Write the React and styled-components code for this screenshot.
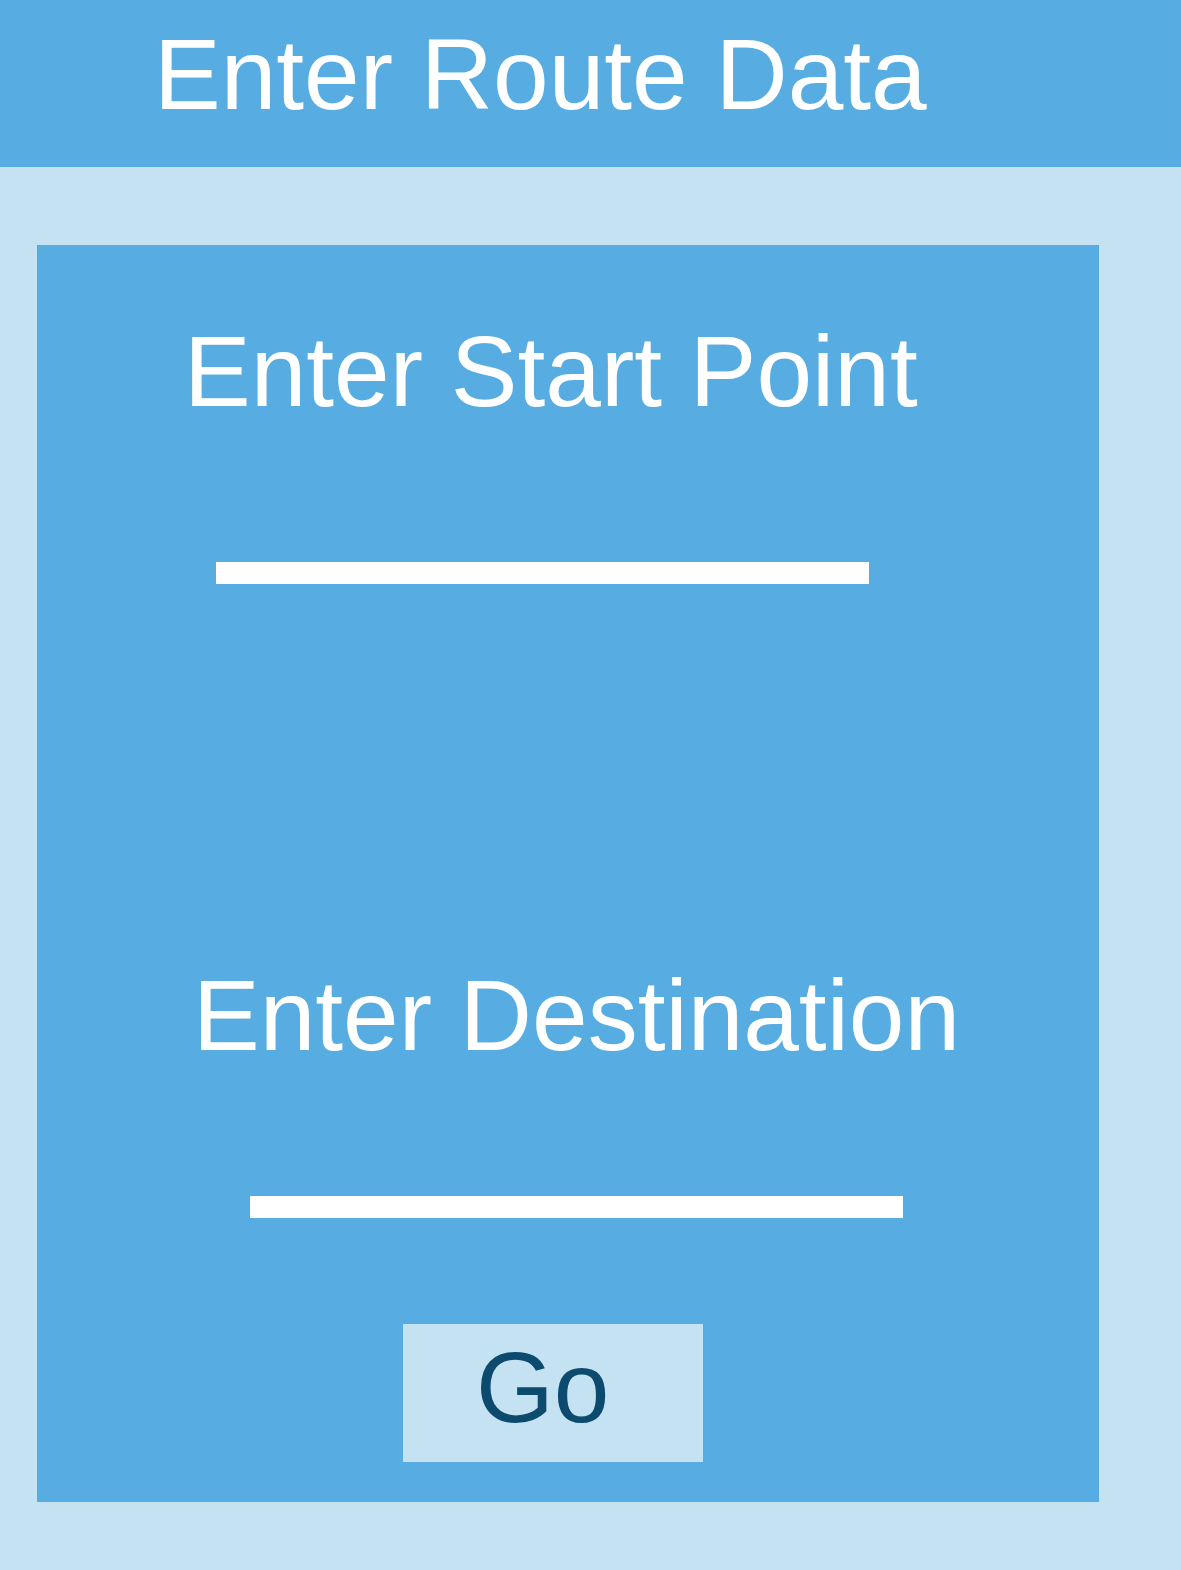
import React from "react";
import styled, { createGlobalStyle } from "styled-components";

const Global = createGlobalStyle`
  html, body {
    margin: 0;
    padding: 0;
    background: #c5e2f3;
  }
  body {
    font-family: "Liberation Sans", Arial, sans-serif;
    min-height: 1570px;
  }
  * { box-sizing: border-box; }
`;

const Page = styled.div`
  display: flex;
  flex-direction: column;
  min-height: 1570px;
  background: #c5e2f3;
`;

const Header = styled.header`
  height: 167px;
  background: #57ade1;
  padding: 24px 0 0 154px;
`;

const Title = styled.h1`
  margin: 0;
  font-weight: 400;
  font-size: 100px;
  line-height: 100px;
  color: #ffffff;
  white-space: nowrap;
`;

const Panel = styled.section`
  margin: 78px 0 0 37px;
  width: 1062px;
  background: #57ade1;
  padding: 76px 0 40px 0;
  display: flex;
  flex-direction: column;
  align-items: flex-start;
`;

const Label = styled.label`
  display: block;
  margin: ${(p) => p.$top}px 0 0 ${(p) => p.$left}px;
  font-size: 100px;
  line-height: 100px;
  color: #ffffff;
  white-space: nowrap;
`;

const Field = styled.input`
  display: block;
  margin: ${(p) => p.$top}px 0 0 ${(p) => p.$left}px;
  width: 653px;
  height: 22px;
  border: none;
  padding: 0;
  background: #ffffff;
  outline: none;
`;

const GoButton = styled.button`
  margin: 106px 0 0 366px;
  width: 300px;
  height: 138px;
  border: none;
  background: #c5e2f3;
  color: #0c4a6e;
  font-family: "Liberation Sans", Arial, sans-serif;
  font-size: 100px;
  line-height: 100px;
  text-align: left;
  padding: 13px 0 0 73px;
  display: flex;
  align-items: flex-start;
  cursor: pointer;
`;

export default function App() {
  return (
    <>
      <Global />
      <Page>
        <Header>
          <Title>Enter Route Data</Title>
        </Header>
        <Panel>
          <Label $top={0} $left={147}>Enter Start Point</Label>
          <Field $top={141} $left={179} aria-label="Start point" />
          <Label $top={381} $left={156}>Enter Destination</Label>
          <Field $top={131} $left={213} aria-label="Destination" />
          <GoButton>Go</GoButton>
        </Panel>
      </Page>
    </>
  );
}
